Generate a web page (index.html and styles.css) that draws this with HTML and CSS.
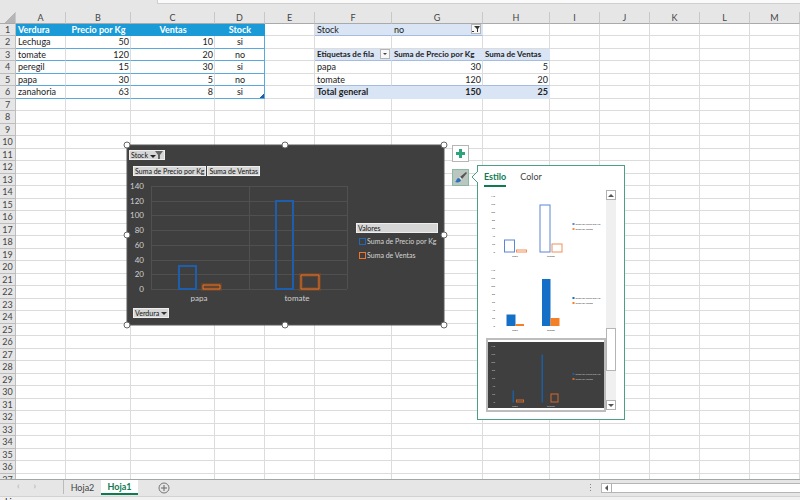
FILE: index.html
```
<!DOCTYPE html>
<html lang="es">
<head>
  <meta charset="UTF-8" />
  <meta name="viewport" content="width=device-width, initial-scale=1" />
  <title>Verduras | Hoja1</title>
  <link rel="stylesheet" href="styles.css">
</head>
<body>

  <div class="ribbon"><div class="formula"></div></div>

  <main class="sheet">
    <table class="grid">
      <colgroup>
        <col class="w-num"><col class="w-50"><col class="w-b"><col class="w-c"><col class="w-50">
        <col class="w-50"><col class="w-f"><col class="w-g"><col class="w-h"><col class="w-50">
        <col class="w-50"><col class="w-50"><col class="w-50"><col>
      </colgroup>
      <thead>
        <tr>
          <th class="corner"></th>
          <th>A</th><th>B</th><th>C</th><th>D</th><th>E</th><th>F</th><th>G</th>
          <th>H</th><th>I</th><th>J</th><th>K</th><th>L</th><th>M</th>
        </tr>
      </thead>
      <tbody id="filas">
        <tr>
          <th>1</th>
          <td class="head left">Verdura</td><td class="head">Precio por Kg</td><td class="head">Ventas</td><td class="head">Stock</td>
          <td></td>
          <td class="pivot line">Stock</td>
          <td class="pivot line"><div class="cell">no
            <button class="drop" aria-label="Filtrar Stock"><svg width="8" height="8" viewBox="0 0 8 8"><path d="M2 1h6L6 4v3H5V4z" fill="#333"/><path d="M0 6h2v1H0z" fill="#333"/></svg></button></div></td>
          <td></td><td></td><td></td><td></td><td></td><td></td>
        </tr>
        <tr>
          <th>2</th>
          <td class="item">Lechuga</td><td class="item num">50</td><td class="item num">10</td><td class="item mid end">si</td>
          <td></td><td></td><td></td><td></td><td></td><td></td><td></td><td></td><td></td>
        </tr>
        <tr>
          <th>3</th>
          <td class="item">tomate</td><td class="item num">120</td><td class="item num">20</td><td class="item mid end">no</td>
          <td></td>
          <td class="pivot line title"><div class="cell">Etiquetas de fila
            <button class="drop" aria-label="Filtrar etiquetas"><svg width="8" height="8" viewBox="0 0 8 8"><path d="M2 3h4L4 5z" fill="#444"/></svg></button></div></td>
          <td class="pivot line title">Suma de Precio por Kg</td><td class="pivot line title">Suma de Ventas</td>
          <td></td><td></td><td></td><td></td><td></td>
        </tr>
        <tr>
          <th>4</th>
          <td class="item">peregil</td><td class="item num">15</td><td class="item num">30</td><td class="item mid end">si</td>
          <td></td><td>papa</td><td class="num">30</td><td class="num">5</td>
          <td></td><td></td><td></td><td></td><td></td>
        </tr>
        <tr>
          <th>5</th>
          <td class="item">papa</td><td class="item num">30</td><td class="item num">5</td><td class="item mid end">no</td>
          <td></td><td class="line">tomate</td><td class="line num">120</td><td class="line num">20</td>
          <td></td><td></td><td></td><td></td><td></td>
        </tr>
        <tr>
          <th>6</th>
          <td class="item">zanahoria</td><td class="item num">63</td><td class="item num">8</td><td class="item mid end last">si</td>
          <td></td><td class="pivot bold">Total general</td><td class="pivot bold num">150</td><td class="pivot bold num">25</td>
          <td></td><td></td><td></td><td></td><td></td>
        </tr>
      </tbody>
    </table>

    <div class="object">
      <section class="chart">
        <div class="fields"><button class="field">Stock <svg width="13" height="8" viewBox="0 0 13 8"><path d="M0 4h6L3 7z" fill="#222"/><path d="M5 0h8l-3 4v4H8V4z" fill="#666"/></svg></button></div>
        <div class="fields values"><button class="field">Suma de Precio por Kg</button><button class="field">Suma de Ventas</button></div>
        <div class="body">
          <svg class="plot" width="224" height="126" viewBox="0 0 224 126">
            <g id="ejes"></g>
            <g fill="none" stroke="#1d5fae" stroke-width="2">
              <path d="M50 86h17v23H50zM147 21h17v88h-17z"/>
            </g>
            <g fill="none" stroke="#8a4a1c" stroke-width="4" opacity=".5"><path d="M74 105h17v4H74zM172 95h18v14h-18z"/></g>
            <g fill="none" stroke="#ed7428"><path d="M74 105h17v4H74zM172 95h18v14h-18z"/></g>
            <text x="70" y="121" class="cat">papa</text>
            <text x="168" y="121" class="cat">tomate</text>
          </svg>
          <div class="legend">
            <button class="field">Valores</button>
            <span class="key">Suma de Precio por Kg</span>
            <span class="key orange">Suma de Ventas</span>
          </div>
        </div>
        <div class="fields axis"><button class="field">Verdura <svg width="6" height="8" viewBox="0 0 6 8"><path d="M0 3h6L3 6z" fill="#333"/></svg></button></div>
        <svg class="frame" width="325" height="188" viewBox="-4 -4 325 188">
          <path d="M0 0h317v180H0z" fill="none" stroke="#595959"/>
          <g fill="#fff" stroke="#666">
            <circle cx="0" cy="0" r="3"/><circle cx="158" cy="0" r="3"/><circle cx="317" cy="0" r="3"/>
            <circle cx="0" cy="90" r="3"/><circle cx="317" cy="90" r="3"/>
            <circle cx="0" cy="180" r="3"/><circle cx="158" cy="180" r="3"/><circle cx="317" cy="180" r="3"/>
          </g>
        </svg>
      </section>

      <div class="tools">
        <button class="tool" aria-label="Elementos de gráfico"><svg width="9" height="9" viewBox="0 0 9 9"><path d="M3 0h3v3h3v3H6v3H3V6H0V3h3z" fill="#2fa37c"/></svg></button>
        <button class="tool on" aria-label="Estilos de gráfico"><svg width="13" height="13" viewBox="0 0 13 13"><path d="M12 1L13 2 8 8 6 6z" fill="#555"/><path d="M6 6l2 2-1 1-2-2z" fill="#eee"/><path d="M5 7l2 2c0 2-3 3-6 2 2-1 1-4 4-4z" fill="#2b72b8"/></svg></button>
      </div>

      <aside class="panel">
        <svg class="arrow" width="7" height="14" viewBox="0 0 7 14"><path d="M7 1L1 7l6 6" fill="#fff" stroke="#4c9f82"/></svg>
        <nav class="tabs">
          <button class="tab active">Estilo</button>
          <button class="tab">Color</button>
        </nav>
        <div class="gallery">
          <div class="thumbs" id="estilos"></div>
          <div class="scroll">
            <button aria-label="Subir"><svg width="6" height="3" viewBox="0 0 6 3"><path d="M0 3h6L3 0z" fill="#555"/></svg></button>
            <div class="thumb-bar"></div>
            <button aria-label="Bajar"><svg width="6" height="3" viewBox="0 0 6 3"><path d="M0 0h6L3 3z" fill="#555"/></svg></button>
          </div>
        </div>
      </aside>
    </div>
  </main>

  <footer class="bottom">
    <div class="arrows"><span>‹</span><span>›</span></div>
    <button class="hoja">Hoja2</button>
    <button class="hoja active">Hoja1</button>
    <button class="add" aria-label="Hoja nueva"><svg width="12" height="12" viewBox="0 0 12 12"><circle cx="6" cy="6" r="5" fill="none" stroke="#777"/><path d="M6 3v6M3 6h6" stroke="#666"/></svg></button>
    <svg class="dots" width="3" height="8" viewBox="0 0 3 8"><path d="M1 0h1v1H1zM1 3h1v1H1zM1 6h1v1H1z" fill="#888"/></svg>
    <div class="hscroll"><button aria-label="Izquierda"><svg width="3" height="6" viewBox="0 0 3 6"><path d="M3 0v6L0 3z" fill="#555"/></svg></button></div>
  </footer>
  <div class="status">Li</div>

  <script src="script.js"></script>
</body>
</html>
```
FILE: styles.css
```
:root {
  --gris: #e6e6e6;
  --linea: #dcdcdc;
  --azul: #1a9bd7;
  --verde: #0f7b50;
  --oscuro: #3f3f3f;
}

* {
  box-sizing: border-box;
  margin: 0;
  padding: 0;
}

body {
  display: flex;
  flex-direction: column;
  height: 100vh;
  overflow: hidden;
  background: var(--gris);
  color: #222;
  font-family: Lato, "Open Sans", sans-serif;
  font-size: 9px;
}

button {
  font: inherit;
  color: inherit;
  border: none;
  background: none;
}

svg {
  display: block;
  flex: none;
}

.ribbon {
  height: 12px;
  padding-left: 157px;
  flex: none;
}

.formula {
  height: 4px;
  background: #fafafa;
  border: 1px solid #cfcfcf;
  border-top: none;
  border-right: none;
}

/* hoja */
.sheet {
  flex: 1;
  min-height: 0;
  position: relative;
  overflow: hidden;
  background: white;
}

.grid {
  width: 100%;
  table-layout: fixed;
  border-collapse: separate;
  border-spacing: 0;
}

.w-num { width: 16px; }
.w-50 { width: 50px; }
.w-b { width: 65px; }
.w-c { width: 84px; }
.w-f { width: 77px; }
.w-g { width: 91px; }
.w-h { width: 67px; }

.grid th,
.grid td {
  height: 12px;
  line-height: 11px;
  padding: 0 1px 0 2px;
  border-right: 1px solid var(--linea);
  border-bottom: 1px solid var(--linea);
  white-space: nowrap;
}

.grid tbody tr:nth-child(even) > * {
  height: 13px;
  line-height: 12px;
}

.grid th {
  padding: 0;
  background: var(--gris);
  color: #444;
  font-weight: normal;
  border-color: #bdbdbd;
}

.grid thead th {
  border-right-color: #c8c8c8;
  border-bottom-color: #aaa;
}

.grid .corner {
  background: linear-gradient(135deg, var(--gris) 60%, #b5b5b5 60%);
}

.grid .head {
  background: var(--azul);
  border-color: var(--azul);
  color: white;
  font-weight: bold;
  text-align: center;
}

.grid .left {
  text-align: left;
}

.grid .item {
  border-bottom-color: #5aa9dc;
}

.grid .end {
  border-right-color: #5aa9dc;
}

.grid .last {
  background: linear-gradient(315deg, #1f5fa8 3px, white 3px);
}

.num {
  text-align: right;
}

.mid {
  text-align: center;
}

.bold,
.title {
  font-weight: bold;
}

.title {
  font-size: 8px;
}

.grid .pivot {
  background: #d9e4f4;
  border-color: #d9e4f4;
}

.grid .line {
  border-bottom-color: #a3bce0;
}

.cell {
  display: flex;
  justify-content: space-between;
}

.drop {
  width: 10px;
  height: 10px;
  flex: none;
  display: flex;
  align-items: center;
  justify-content: center;
  background: #f8f8f8;
  border: 1px solid #b5b5b5;
}

/* grafico */
.object {
  position: absolute;
  left: 127px;
  top: 133px;
  display: flex;
  align-items: flex-start;
  gap: 8px;
}

.chart {
  position: relative;
  width: 317px;
  height: 180px;
  padding: 5px 2px;
  background: var(--oscuro);
  color: #d5d5d5;
  font-size: 7px;
}

.frame {
  position: absolute;
  left: -4px;
  top: -4px;
}

.fields {
  display: flex;
  gap: 1px;
}

.values {
  margin-top: 6px;
  padding-left: 4px;
}

.axis {
  padding-left: 4px;
}

.field {
  display: flex;
  align-items: center;
  gap: 2px;
  height: 10px;
  padding: 0 1px;
  background: #d6d6d6;
  border: 1px solid #eee;
  color: #111;
  line-height: 8px;
  white-space: nowrap;
}

.body {
  display: flex;
  height: 132px;
  padding-top: 4px;
}

.plot text {
  fill: #cfcfcf;
  font-size: 8px;
}

#ejes path {
  shape-rendering: crispEdges;
}

.plot .num-eje {
  text-anchor: end;
}

.plot .cat {
  text-anchor: middle;
}

.legend {
  width: 82px;
  margin-left: 3px;
  padding-top: 43px;
  white-space: nowrap;
}

.legend .field {
  width: 100%;
  margin-bottom: 1px;
}

.key {
  display: flex;
  align-items: center;
  gap: 1px;
  height: 14px;
  padding-left: 3px;
}

.key::before {
  content: "";
  width: 5px;
  height: 5px;
  flex: none;
  border: 1px solid #2467b5;
}

.key.orange::before {
  border-color: #ed7428;
}

.tools {
  display: flex;
  flex-direction: column;
  gap: 7px;
}

.tool {
  width: 17px;
  height: 17px;
  display: flex;
  align-items: center;
  justify-content: center;
  background: white;
  border: 1px solid #b5b5b5;
}

.tool.on {
  background: #bcc6c1;
  border-color: #86b8a3;
}

/* panel de estilos */
.panel {
  position: relative;
  width: 148px;
  height: 255px;
  margin-top: 20px;
  padding: 5px 8px;
  background: white;
  border: 1px solid #4c9f82;
}

.arrow {
  position: absolute;
  left: -7px;
  top: 4px;
}

.tabs {
  display: flex;
  gap: 14px;
  margin-left: -2px;
}

.tab {
  height: 16px;
  line-height: 12px;
  padding-bottom: 2px;
  border-bottom: 2px solid transparent;
  color: #444;
}

.tab.active {
  color: var(--verde);
  border-color: var(--verde);
  font-weight: bold;
}

.gallery {
  display: flex;
  height: 220px;
  margin-top: 3px;
}

.thumbs {
  width: 120px;
  display: flex;
  flex-direction: column;
}

.estilo {
  display: block;
  height: 74px;
  border: 2px solid transparent;
}

.estilo.selected {
  border-color: #bdbdbd;
  padding: 2px 0;
}

.estilo.selected svg {
  background: var(--oscuro);
}

.estilo text {
  font-size: 5px;
  fill: #333;
}

.estilo.selected text {
  fill: #ccc;
}

.estilo .num-eje {
  text-anchor: end;
}

.estilo .cat {
  text-anchor: middle;
}

.scroll {
  width: 10px;
  display: flex;
  flex-direction: column;
  background: #f0f0f0;
}

.scroll button,
.hscroll button {
  width: 10px;
  height: 10px;
  flex: none;
  display: flex;
  align-items: center;
  justify-content: center;
  background: white;
  border: 1px solid #b0b0b0;
}

.thumb-bar {
  height: 43px;
  margin: auto 0 29px;
  background: white;
  border: 1px solid #b5b5b5;
}

/* hojas */
.bottom {
  height: 18px;
  flex: none;
  display: flex;
  align-items: flex-start;
  border-top: 1px solid #9fa8a3;
  border-bottom: 1px solid #d2d2d2;
  color: #444;
}

.arrows {
  width: 64px;
  height: 14px;
  display: flex;
  gap: 14px;
  padding-left: 17px;
  border-right: 1px solid #bbb;
  color: #aaa;
}

.hoja {
  width: 37px;
  height: 15px;
  line-height: 14px;
}

.hoja.active {
  background: white;
  color: var(--verde);
  font-weight: bold;
  border-bottom: 2px solid var(--verde);
}

.add {
  margin: 2px auto 0 20px;
}

.dots {
  margin: 4px 9px 0 0;
}

.hscroll {
  width: 199px;
  height: 10px;
  margin-top: 3px;
  background: white;
  border: 1px solid #b5b5b5;
  border-right: none;
}

.hscroll button {
  height: 8px;
  border-width: 0 1px 0 0;
}

.status {
  height: 3px;
  flex: none;
  overflow: hidden;
  padding-left: 5px;
  line-height: 9px;
  background: #f1f1f1;
}
```
FILE: script.js
```
// filas vacias debajo de los datos
const filas = document.getElementById("filas");
for (let n = 7; n <= 37; n++) {
  const tr = document.createElement("tr");
  tr.innerHTML = `<th>${n}</th>` + "<td></td>".repeat(13);
  filas.appendChild(tr);
}

// eje vertical del grafico
let ejes = '<path d="M22 6v103M120 6v103M218 6v103" stroke="#505050"/>';
for (let i = 0; i <= 7; i++) {
  const y = 109 - Math.round(i * 103 / 7);
  ejes += `<path d="M22 ${y}h196" stroke="#505050"/>
    <text x="15" y="${y + 3}" class="num-eje">${i * 20}</text>`;
}
document.getElementById("ejes").innerHTML = ejes;

// miniaturas: [x, ancho, alto] de cada barra
const estilos = [
  { relleno: false, azul: "#5b86d6", naranja: "#f0905a", barras: [[33, 20, 24], [57, 20, 4], [104, 20, 94], [128, 20, 16]] },
  { relleno: true, azul: "#1470c6", naranja: "#f57f24", barras: [[37, 18, 23], [55, 17, 4], [108, 17, 94], [125, 18, 16]] },
  { relleno: false, azul: "#1d5f9e", naranja: "#d06a2c", barras: [[50, 1, 22], [57, 14, 4], [108, 1, 94], [126, 14, 16]], elegido: true }
];

estilos.forEach(e => {
  const boton = document.createElement("button");
  boton.className = e.elegido ? "estilo selected" : "estilo";
  let dibujo = "";
  for (let i = 0; i <= 7; i++) {
    dibujo += `<text x="14" y="${122 - i * 16}" class="num-eje">${i * 20}</text>`;
  }
  e.barras.forEach(([x, w, h], i) => {
    const color = i % 2 ? e.naranja : e.azul;
    dibujo += `<rect x="${x}" y="${120 - h}" width="${w}" height="${h}" fill="${e.relleno ? color : "none"}" stroke="${color}" stroke-width="${e.relleno ? 0 : 2}"/>`;
  });
  dibujo += `<text x="54" y="130" class="cat">papa</text><text x="126" y="130" class="cat">tomate</text>
    <rect x="169" y="62" width="4" height="4" fill="${e.azul}"/><text x="175" y="66">Suma de Precio por Kg</text>
    <rect x="169" y="72" width="4" height="4" fill="${e.naranja}"/><text x="175" y="76">Suma de Ventas</text>`;
  const alto = e.elegido ? 66 : 70;
  boton.innerHTML = `<svg width="116" height="${alto}" viewBox="0 0 232 ${alto * 2}">${dibujo}</svg>`;
  document.getElementById("estilos").appendChild(boton);
});
```
